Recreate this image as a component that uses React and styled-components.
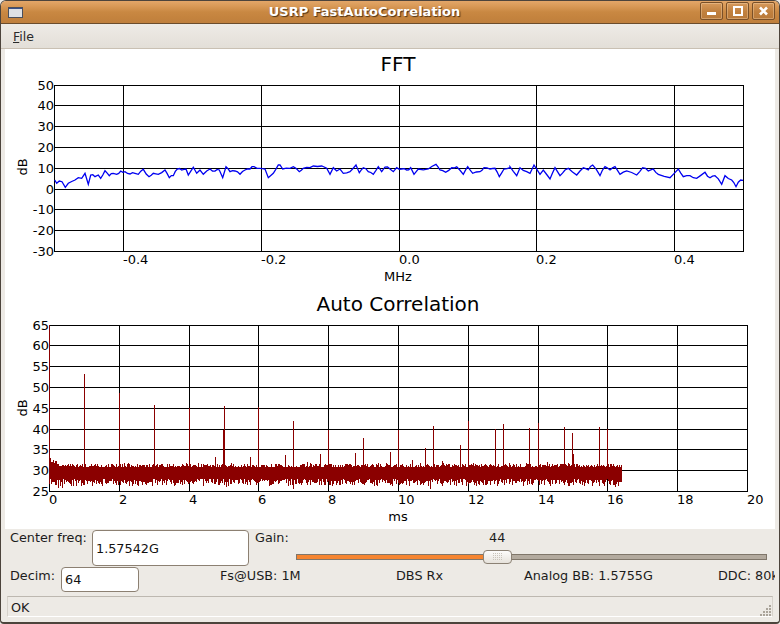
import React from 'react';
import styled, { createGlobalStyle } from 'styled-components';

const GlobalStyle = createGlobalStyle`
  html, body { margin: 0; padding: 0; background: #edeae5; }
  * { box-sizing: border-box; }
`;

const UI_FONT = '"DejaVu Sans", Verdana, sans-serif';

const Window = styled.div`
  width: 780px;
  height: 624px;
  display: flex;
  flex-direction: column;
  background: #edeae5;
  border: 1px solid #4c443c;
  border-width: 1px 1px 2px 1px;
  border-radius: 6px 6px 4px 4px;
  overflow: hidden;
  font-family: ${UI_FONT};
  font-size: 12.8px;
  color: #1c1c1c;
`;

const TitleBar = styled.div`
  height: 23px;
  flex: none;
  display: flex;
  align-items: center;
  padding: 0 4px 2px 7px;
  gap: 3px;
  background: linear-gradient(#e3a669 0%, #d99a58 22%, #c98842 50%, #c4833e 75%, #bf7f3d 100%);
  border-bottom: 1px solid #6b4c2c;
`;

const TitleText = styled.div`
  flex: 1;
  text-align: center;
  font-weight: bold;
  font-size: 13px;
  color: #fff;
  padding-left: 4px;
  text-shadow: 1px 1px 1px #4d3216;
`;

const WindowIcon = styled.svg`
  width: 15px;
  height: 11px;
  flex: none;
  margin-right: 2px;
  margin-top: 2px;
`;

const TitleButton = styled.button`
  width: 23px;
  height: 18px;
  padding: 0;
  display: flex;
  align-items: center;
  justify-content: center;
  border: 1px solid #7a5028;
  border-radius: 2px;
  background: linear-gradient(#d79a5c, #c0803e 55%, #b97a3a);
  box-shadow: inset 0 0 0 1px rgba(255, 226, 190, 0.35);
`;

const MenuBar = styled.div`
  height: 25px;
  flex: none;
  display: flex;
  align-items: center;
  padding: 1px 0 0 12px;
  background: linear-gradient(#eeebe6, #e3dfd8);
  border-bottom: 1px solid #c9c0b3;
`;

const MenuItem = styled.span`
  font-size: 12.5px;
  color: #2a2a2a;
`;

const Mnemonic = styled.span`
  text-decoration: underline;
`;

const PlotArea = styled.main`
  flex: none;
  height: 480px;
  margin: 0 4px;
  background: #fff;
  display: flex;
  flex-direction: column;
`;

const PlotSvg = styled.svg`
  display: block;
  width: 770px;
  height: 240px;
  flex: none;
  font-family: ${UI_FONT};
`;

const AxisText = styled.text`
  font-size: 13px;
  fill: #000;
`;

const PlotTitle = styled.text`
  font-size: 20px;
  fill: #000;
`;

const Controls = styled.section`
  flex: none;
  display: flex;
  flex-direction: column;
  padding: 1px 4px 0 9px;
`;

const TopRow = styled.div`
  height: 37px;
  display: flex;
  align-items: flex-start;
`;

const Label = styled.label`
  display: block;
  flex: none;
  width: ${p => p.$w}px;
  white-space: nowrap;
  line-height: 15px;
  padding-top: ${p => p.$top || 0}px;
`;

const FieldBox = styled.div`
  width: ${p => p.$w}px;
  height: ${p => p.$h}px;
  flex: none;
  display: flex;
  align-items: center;
  padding-left: 3px;
  background: #fff;
  border: 1px solid #8c8072;
  border-radius: 4px;
  color: #111;
`;

const GainLabelSlot = styled.div`
  margin-left: 6px;
  width: 41px;
  flex: none;
`;

const SliderColumn = styled.div`
  width: 471px;
  flex: none;
  display: flex;
  flex-direction: column;
`;

const SliderValue = styled.div`
  height: 21px;
  padding: 0 0 0 193px;
  line-height: 15px;
`;

const SliderTrack = styled.div`
  position: relative;
  height: 6px;
  margin-top: 3px;
  background: #b3aa9e;
  border: 1px solid #7f766a;
`;

const SliderFill = styled.div`
  height: 100%;
  background: #f5842f;
`;

const SliderThumb = styled.div`
  position: absolute;
  top: -5px;
  left: 186px;
  width: 29px;
  height: 14px;
  border: 1px solid #8b8174;
  border-radius: 4px;
  background: linear-gradient(#fdfcfb, #e6e2db);
  display: flex;
  align-items: center;
  justify-content: center;
`;

const BottomRow = styled.div`
  height: 27px;
  display: grid;
  grid-template-columns: 210px 176px 128px 194px 60px;
  align-items: start;
  overflow: hidden;
  width: 765px;
`;

const DecimCell = styled.div`
  display: flex;
  align-items: flex-start;
`;

const InfoText = styled.div`
  white-space: nowrap;
  line-height: 15px;
  padding-top: 1px;
`;

const StatusBar = styled.footer`
  position: relative;
  height: 21px;
  margin: 2px 6px 0 6px;
  flex: none;
  display: flex;
  align-items: center;
  padding: 2px 3px 0;
  border-top: 1px solid #bdb8b0;
  border-left: 1px solid #d6d2cb;
  border-right: 1px solid #d6d2cb;
  border-bottom: 1px solid #fff;
`;

const SizeGrip = styled.svg`
  position: absolute;
  right: 0;
  bottom: 0;
  width: 12px;
  height: 12px;
`;

/* --- data --- */

function rng(seed) {
  let s = seed >>> 0;
  return () => {
    s = (s + 0x6d2b79f5) >>> 0;
    let t = s;
    t = Math.imul(t ^ (t >>> 15), t | 1);
    t ^= t + Math.imul(t ^ (t >>> 7), t | 61);
    return ((t ^ (t >>> 14)) >>> 0) / 4294967296;
  };
}

const trace = (ox, oy, list) => list.map(([x, y]) => [ox + x / 3, oy + y / 3]);

const fftPoints = [
  ...trace(50, 155, [[14,75],[20,85],[28,78],[36,80],[46,97],[55,85],[75,75],[85,68],[95,70],[105,55],[115,88],[122,60],[135,65],[145,60],[152,70],[165,47],[178,62],[190,55],[200,58],[212,48],[225,50],[240,57],[255,55],[265,58],[280,43],[297,65],[310,55],[325,58],[345,45],[358,68],[370,62],[382,42],[395,45],[408,42],[415,60],[430,37],[440,55],[450,45],[460,58],[470,48],[480,42],[495,48],[508,45],[518,68],[528,35],[540,50],[555,48],[570,58],[585,45],[600,42],[612,35],[630,40],[645,42],[655,68],[670,55],[685,30],[690,30]]),
  ...trace(280, 155, [[0,30],[8,42],[30,40],[40,35],[58,50],[70,40],[90,38],[100,33],[125,33],[140,40],[150,58],[160,38],[170,48],[180,42],[190,55],[210,50],[228,30],[238,53],[250,38],[265,50],[280,58],[295,35],[305,50],[315,36],[330,42],[340,50],[350,38],[365,42],[380,45],[392,38],[402,58],[415,42],[445,42],[468,28],[480,45],[497,52],[515,38],[530,35],[550,58],[563,35],[578,55],[600,50],[612,38],[630,42],[645,40],[658,65],[672,42],[690,38]]),
  ...trace(510, 155, [[0,35],[20,62],[30,38],[50,50],[60,55],[72,30],[90,58],[100,45],[120,72],[135,38],[150,62],[165,45],[175,40],[200,60],[220,38],[235,45],[248,30],[270,62],[285,35],[300,45],[315,35],[330,58],[350,48],[380,60],[398,38],[415,48],[430,42],[445,58],[480,68],[505,42],[520,65],[540,62],[560,70],[585,52],[600,68],[615,62],[635,88],[645,62],[665,75],[678,95],[692,75],[699,76]]),
];

function buildFftPath() {
  const r = rng(77);
  let d = '';
  fftPoints.forEach(([x, y], i) => {
    if (i > 0) {
      const [px0, py0] = fftPoints[i - 1];
      if (x - px0 > 3.5) {
        d += `L${((px0 + x) / 2).toFixed(1)} ${((py0 + y) / 2 + (r() - 0.5) * 2.4).toFixed(1)}`;
      }
    }
    d += `${i ? 'L' : 'M'}${x.toFixed(1)} ${y.toFixed(1)}`;
  });
  return d;
}
const fftPath = buildFftPath();

const spikes = [
  ...trace(0, 360, [[253,42],[358,100],[463,135],[568,145],[646,290],[752,290],[774,145]]),
  ...trace(210, 400, [[16,172],[43,18],[65,190],[122,172],[146,22],[226,165],[250,63],[292,185],[331,162],[356,90],[436,158],[460,113],[541,155],[565,90],[607,180],[646,145],[670,78],[698,183]]),
  ...trace(440, 400, [[7,183],[60,135],[85,63],[166,88],[190,72],[268,85],[295,68],[322,185],[373,82],[397,99],[478,82],[502,88]]),
];
const thickSpikes = [[223, 430], [529, 443], [573, 454]];

function buildCorrelationPath() {
  const r = rng(1234);
  let d = '';
  for (let x = 49; x < 622; x++) {
    const edge = x < 60 ? (60 - x) * 0.55 : 0;
    const top = 467 - Math.pow(r(), 1.6) * 3.6 - edge;
    const bottom = 479 + Math.pow(r(), 1.2) * 7 + (r() > 0.97 ? 3 : 0);
    d += `M${x + 0.5} ${top.toFixed(0)}V${bottom.toFixed(0)}`;
  }
  spikes.forEach(([x, y]) => {
    d += `M${Math.floor(x) + 0.5} ${Math.round(y)}V478`;
  });
  thickSpikes.forEach(([x, y]) => {
    d += `M${x + 0.5} ${y}V478`;
  });
  d += 'M49.5 325V478';
  return d;
}
const correlationPath = buildCorrelationPath();

function Plot({ top, title, titleY, box, xTicks, yTicks, xLabel, xLabelY, xTickY, dbX, dbY, children }) {
  const { l, r, t, b } = box;
  return (
    <PlotSvg viewBox={`5 ${top} 770 240`}>
      <PlotTitle x="398" y={titleY} textAnchor="middle">{title}</PlotTitle>
      <g stroke="#000" strokeWidth="1" shapeRendering="crispEdges" fill="none">
        <rect x={l + 0.5} y={t + 0.5} width={r - l} height={b - t} />
        {xTicks.map(k => <line key={k.label} x1={k.x + 0.5} x2={k.x + 0.5} y1={t} y2={b} />)}
        {yTicks.map(k => <line key={k.label} x1={l} x2={r} y1={k.y + 0.5} y2={k.y + 0.5} />)}
      </g>
      {children}
      {yTicks.map(k => (
        <AxisText key={k.label} x={l} y={k.y + 4.5} textAnchor="end">{k.label}</AxisText>
      ))}
      {xTicks.map(k => (
        <AxisText key={k.label} x={k.x} y={xTickY}>{k.label}</AxisText>
      ))}
      <AxisText x="398" y={xLabelY} textAnchor="middle">{xLabel}</AxisText>
      <AxisText x="0" y="0" textAnchor="middle" transform={`translate(${dbX} ${dbY}) rotate(-90)`}>dB</AxisText>
    </PlotSvg>
  );
}

const fftX = [[123, '-0.4'], [261, '-0.2'], [399, '0.0'], [536, '0.2'], [674, '0.4']].map(([x, label]) => ({ x, label }));
const fftRows = [85, 105, 126, 147, 168, 189, 209, 230, 251];
const fftY = [50, 40, 30, 20, 10, 0, -10, -20, -30].map((v, i) => ({ label: String(v), y: fftRows[i] }));
const acCols = [49, 119, 189, 258, 328, 398, 468, 538, 607, 677, 747];
const acX = acCols.map((x, i) => ({ label: String(i * 2), x }));
const acRows = [325, 345, 366, 387, 408, 429, 449, 470, 491];
const acY = [65, 60, 55, 50, 45, 40, 35, 30, 25].map((v, i) => ({ label: String(v), y: acRows[i] }));

export default function App() {
  return (
    <>
      <GlobalStyle />
      <Window>
        <TitleBar>
          <WindowIcon viewBox="0 0 15 11" shapeRendering="crispEdges">
            <rect x="0.5" y="0.5" width="14" height="10" fill="#dfe1e4" stroke="#4a4f5c" />
            <rect x="1" y="1" width="13" height="1" fill="#39508a" />
          </WindowIcon>
          <TitleText>USRP FastAutoCorrelation</TitleText>
          <TitleButton aria-label="Minimize">
            <svg width="11" height="10" viewBox="0 0 11 10" shapeRendering="crispEdges">
              <rect x="1" y="6" width="9" height="3" fill="#fff" />
            </svg>
          </TitleButton>
          <TitleButton aria-label="Maximize">
            <svg width="11" height="10" viewBox="0 0 11 10" shapeRendering="crispEdges">
              <rect x="1.5" y="1" width="8" height="8" fill="none" stroke="#fff" strokeWidth="2" />
            </svg>
          </TitleButton>
          <TitleButton aria-label="Close">
            <svg width="11" height="10" viewBox="0 0 11 10">
              <path d="M2 1.5 L9 8.5 M9 1.5 L2 8.5" stroke="#fff" strokeWidth="2.6" fill="none" />
            </svg>
          </TitleButton>
        </TitleBar>
        <MenuBar>
          <MenuItem><Mnemonic>F</Mnemonic>ile</MenuItem>
        </MenuBar>
        <PlotArea>
          <Plot
            top={49}
            title="FFT"
            titleY={71}
            box={{ l: 54, r: 743, t: 85, b: 251 }}
            xTicks={fftX}
            yTicks={fftY}
            xLabel="MHz"
            xLabelY={281}
            xTickY={264}
            dbX={27}
            dbY={167}
          >
            <path d={fftPath} fill="none" stroke="#0000f0" strokeWidth="1.3" />
          </Plot>
          <Plot
            top={289}
            title="Auto Correlation"
            titleY={311}
            box={{ l: 49, r: 747, t: 325, b: 491 }}
            xTicks={acX}
            yTicks={acY}
            xLabel="ms"
            xLabelY={521}
            xTickY={504}
            dbX={27}
            dbY={408}
          >
            <path d={correlationPath} fill="none" stroke="#8b0000" strokeWidth="1" shapeRendering="crispEdges" />
          </Plot>
        </PlotArea>
        <Controls>
          <TopRow>
            <Label $w={82}>Center freq:</Label>
            <FieldBox $w={157} $h={36}>1.57542G</FieldBox>
            <GainLabelSlot><Label $w={41}>Gain:</Label></GainLabelSlot>
            <SliderColumn>
              <SliderValue>44</SliderValue>
              <SliderTrack>
                <SliderFill style={{ width: '40%' }} />
                <SliderThumb>
                  <svg width="9" height="8" viewBox="0 0 9 8" shapeRendering="crispEdges">
                    {[0, 2, 4, 6, 8].map(x => [0, 2, 4, 6].map(y => (
                      <rect key={`${x}-${y}`} x={x} y={y} width="1" height="1" fill="#c9c4bb" />
                    )))}
                  </svg>
                </SliderThumb>
              </SliderTrack>
            </SliderColumn>
          </TopRow>
          <BottomRow>
            <DecimCell>
              <Label $w={51} $top={1}>Decim:</Label>
              <FieldBox $w={78} $h={25}>64</FieldBox>
            </DecimCell>
            <InfoText>Fs@USB: 1M</InfoText>
            <InfoText>DBS Rx</InfoText>
            <InfoText>Analog BB: 1.5755G</InfoText>
            <InfoText>DDC: 80k</InfoText>
          </BottomRow>
        </Controls>
        <StatusBar>
          OK
          <SizeGrip viewBox="0 0 12 12" shapeRendering="crispEdges">
            {[[9, 1], [6, 4], [9, 4], [3, 7], [6, 7], [9, 7], [0, 10], [3, 10], [6, 10], [9, 10]].map(([x, y]) => (
              <rect key={`${x}-${y}`} x={x} y={y} width="1.5" height="1.5" fill="#aaa49a" />
            ))}
          </SizeGrip>
        </StatusBar>
      </Window>
    </>
  );
}
